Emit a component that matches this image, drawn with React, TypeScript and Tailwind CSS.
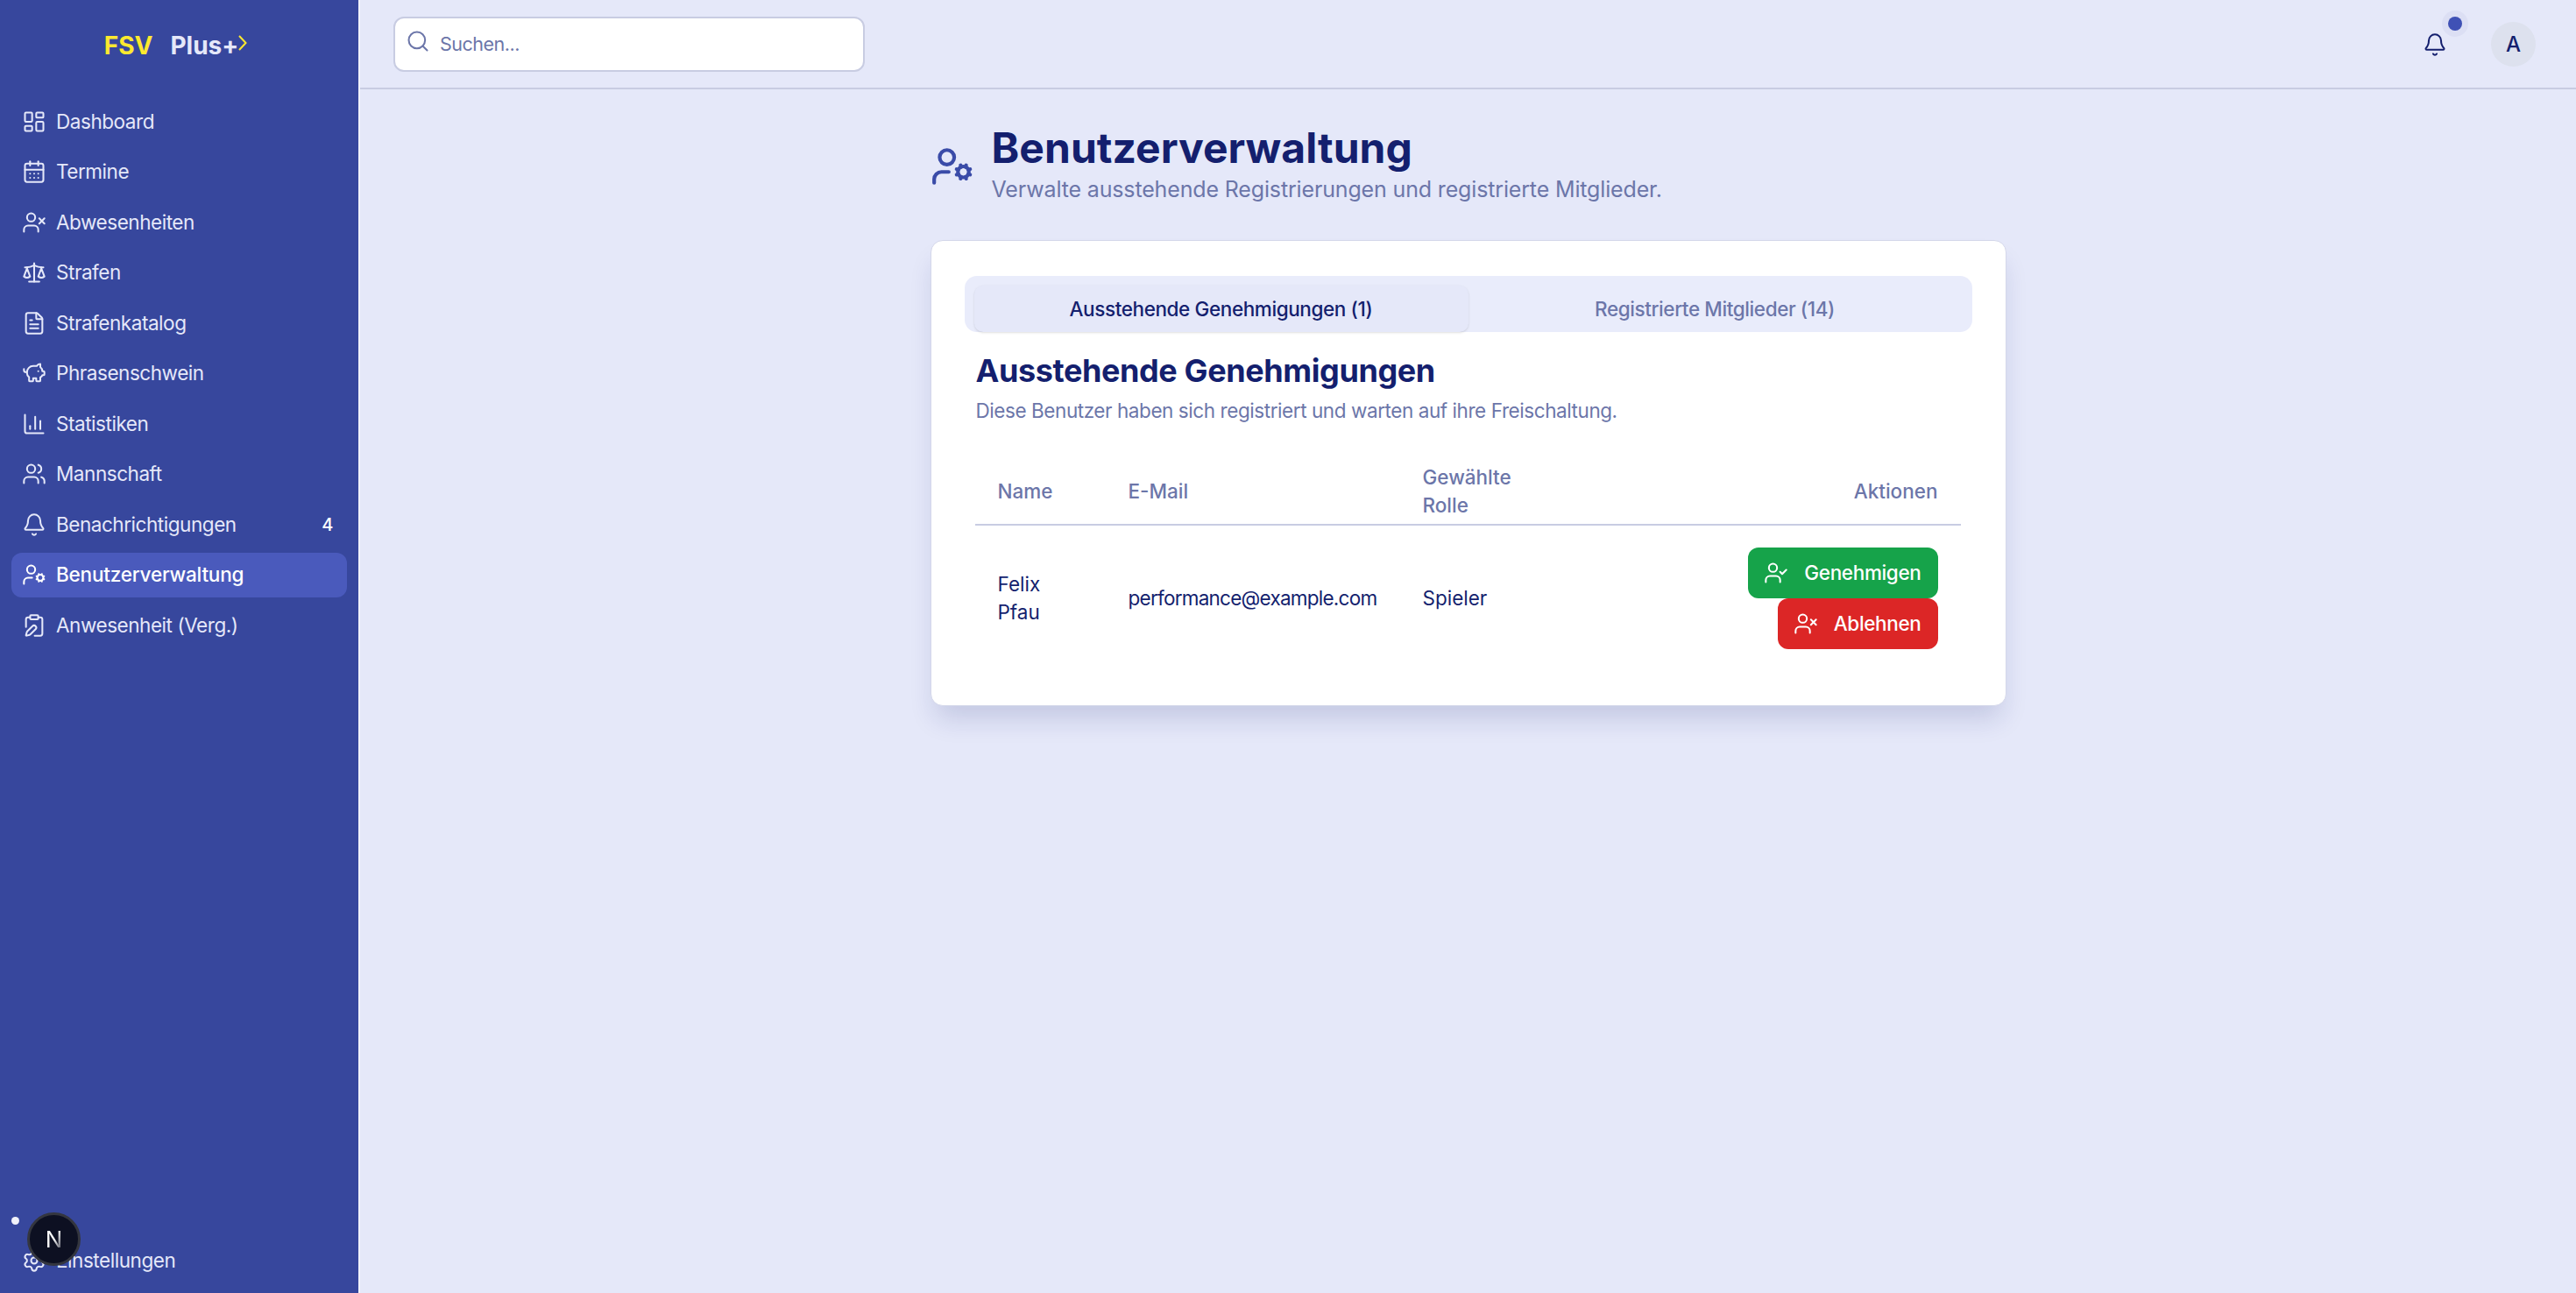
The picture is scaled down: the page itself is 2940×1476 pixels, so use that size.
import {
  Bell,
  CalendarDays,
  ChartColumn,
  ClipboardPen,
  FileText,
  LayoutDashboard,
  PiggyBank,
  Scale,
  Search,
  Settings,
  UserCheck,
  UserCog,
  Users,
  UserX,
} from "lucide-react";

const navItems = [
  { title: "Dashboard", icon: LayoutDashboard },
  { title: "Termine", icon: CalendarDays },
  { title: "Abwesenheiten", icon: UserX },
  { title: "Strafen", icon: Scale },
  { title: "Strafenkatalog", icon: FileText },
  { title: "Phrasenschwein", icon: PiggyBank },
  { title: "Statistiken", icon: ChartColumn },
  { title: "Mannschaft", icon: Users },
  { title: "Benachrichtigungen", icon: Bell, badge: "4" },
  { title: "Benutzerverwaltung", icon: UserCog, active: true },
  { title: "Anwesenheit (Verg.)", icon: ClipboardPen },
];

const NavRow = ({
  title,
  icon: Icon,
  badge,
  active,
}: {
  title: string;
  icon: typeof Bell;
  badge?: string;
  active?: boolean;
}) => (
  <div
    className={`flex h-[51.5px] items-center gap-[11px] rounded-[12px] pl-[12px] pr-[16px] text-[22.5px] ${
      active ? "bg-[#4a5abc] font-medium tracking-[-0.2px] text-white" : "tracking-[-0.45px] text-[#e5e8f9]"
    }`}
  >
    <Icon size={28} strokeWidth={1.75} className="shrink-0" />
    <span className="flex-1">{title}</span>
    {badge && <span className="text-[20px] font-medium text-white">{badge}</span>}
  </div>
);

const Sidebar = () => (
  <aside className="flex h-full w-[411px] shrink-0 flex-col border-r-2 border-[#f2f3fc] bg-[#37479d] pb-[11px]">
    <div className="flex h-[113px] items-start justify-center pr-[8px] pt-[31px] text-[28px] font-bold leading-[42px]">
      <span className="text-[#fde92f]">FSV</span>
      <span className="ml-[20px] text-[#e5e8f9]">Plus+</span>
      <svg width="10" height="22" viewBox="0 0 10 22" className="mt-[9px]" fill="none">
        <path d="M1 1 L8.5 9 L1 17" stroke="#fde92f" strokeWidth="2" />
      </svg>
    </div>
    <nav className="flex flex-1 flex-col gap-[6px] px-[13px]">
      {navItems.map((item) => (
        <NavRow key={item.title} {...item} />
      ))}
    </nav>
    <div className="px-[13px]">
      <NavRow title="Einstellungen" icon={Settings} />
    </div>
  </aside>
);

const Header = () => (
  <header className="flex h-[102px] shrink-0 items-center justify-between border-b-2 border-[#c8cce2] pl-[38px] pr-[46px]">
    <div className="flex h-[63px] w-[538px] items-center gap-[11px] rounded-[12px] border-2 border-[#c8cce2] bg-white pl-[12px]">
      <Search size={28} strokeWidth={1.75} className="mb-[6px] text-[#6c76a9]" />
      <span className="pt-[2px] text-[21.5px] leading-none tracking-[-0.5px] text-[#6c76a9]">Suchen...</span>
    </div>
    <div className="flex items-center gap-[50px] pt-[1px]">
      <div className="relative">
        <Bell size={28} strokeWidth={1.75} className="text-[#141f6e]" />
        <span className="absolute left-[22px] top-[-25px] flex h-[30px] w-[30px] items-center justify-center rounded-full bg-[#dcdff4]">
          <span className="h-[16px] w-[16px] rounded-full bg-[#3f51b5]" />
        </span>
      </div>
      <div className="flex h-[51px] w-[51px] items-center justify-center rounded-full bg-[#dde1ee] text-[24px] font-medium text-[#141f6e]">
        A
      </div>
    </div>
  </header>
);

const ActionButton = ({
  label,
  icon: Icon,
  color,
}: {
  label: string;
  icon: typeof Bell;
  color: string;
}) => (
  <button
    className={`flex h-[58px] items-center gap-[18px] rounded-[12px] pl-[18px] pr-[19px] text-[22.5px] font-medium tracking-[-0.35px] text-white ${color}`}
  >
    <Icon size={28} strokeWidth={1.75} />
    {label}
  </button>
);

const ApprovalCard = () => (
  <section className="rounded-[14px] border border-[#d4d7ea] bg-white px-[38px] pb-[64px] pt-[40px] shadow-[0_20px_30px_-6px_rgba(20,31,110,0.16)]">
    <div className="flex h-[64px] rounded-[14px] bg-[#e9ecfb] pl-[11px] pr-[12px] text-[22.5px] font-medium tracking-[-0.4px]">
      <div className="mt-[11px] flex w-[564px] items-center justify-center rounded-[10px] bg-[#e5e8f9] text-[#141f6e] shadow-sm">
        Ausstehende Genehmigungen (1)
      </div>
      <div className="flex flex-1 items-center justify-center pt-[11px] text-[#6c76a9]">
        Registrierte Mitglieder (14)
      </div>
    </div>
    <h2 className="mt-[22px] pl-[13px] text-[36px] font-bold leading-[44px] tracking-[-0.4px] text-[#141f6e]">
      Ausstehende Genehmigungen
    </h2>
    <p className="mt-[8px] pl-[13px] text-[22.5px] leading-[32px] tracking-[-0.43px] text-[#6c76a9]">
      Diese Benutzer haben sich registriert und warten auf ihre Freischaltung.
    </p>
    <table className="ml-[12px] mt-[44px] w-[1125px] table-fixed text-left text-[22.5px] leading-[32px]">
      <thead className="text-[#6c76a9]">
        <tr className="border-b-2 border-[#c8cce2]">
          <th className="w-[149px] pb-[5px] pl-[26px] pr-[26px] font-medium">Name</th>
          <th className="w-[336px] pb-[5px] pl-[26px] pr-[26px] font-medium">E-Mail</th>
          <th className="w-[170px] pb-[5px] pl-[26px] font-medium">Gewählte Rolle</th>
          <th className="pb-[5px] pr-[26px] text-right font-medium">Aktionen</th>
        </tr>
      </thead>
      <tbody className="text-[#141f6e]">
        <tr>
          <td className="pl-[26px] pr-[26px] pt-[25px]">Felix Pfau</td>
          <td className="whitespace-nowrap pl-[26px] pt-[25px] tracking-[-0.75px]">performance@example.com</td>
          <td className="pl-[26px] pt-[25px]">Spieler</td>
          <td className="pr-[26px] pt-[25px]">
            <div className="flex flex-col items-end">
              <ActionButton label="Genehmigen" icon={UserCheck} color="bg-[#16a34a]" />
              <ActionButton label="Ablehnen" icon={UserX} color="bg-[#dc2626]" />
            </div>
          </td>
        </tr>
      </tbody>
    </table>
  </section>
);

export default function App() {
  return (
    <div className="flex h-[1476px] w-[2940px] overflow-hidden bg-[#e5e8f9] font-['Inter',sans-serif]">
      <Sidebar />
      <div className="flex min-w-0 flex-1 flex-col">
        <Header />
        <main className="mx-auto w-[1228px] pt-[38px]">
          <div className="mb-[41px] flex items-center gap-[20px]">
            <UserCog size={50} strokeWidth={2} className="mt-[6px] text-[#3a4ba8]" />
            <div>
              <h1 className="text-[48px] font-bold leading-[58px] tracking-[0.05px] text-[#141f6e]">Benutzerverwaltung</h1>
              <p className="mt-[1px] text-[25px] leading-[34px] tracking-[-0.15px] text-[#6c76a9]">
                Verwalte ausstehende Registrierungen und registrierte Mitglieder.
              </p>
            </div>
          </div>
          <ApprovalCard />
        </main>
      </div>
      {/* next dev indicator */}
      <div className="absolute left-[13px] top-[1389px] h-[9px] w-[9px] rounded-full bg-[#f0f1fa]" />
      <div className="absolute left-[31px] top-[1384px] flex h-[61px] w-[61px] items-center justify-center rounded-full border-[3px] border-[#34363f] bg-[#0d1022] text-[26px]">
        <span className="bg-gradient-to-br from-white via-white to-transparent bg-clip-text text-transparent">N</span>
      </div>
    </div>
  );
}
